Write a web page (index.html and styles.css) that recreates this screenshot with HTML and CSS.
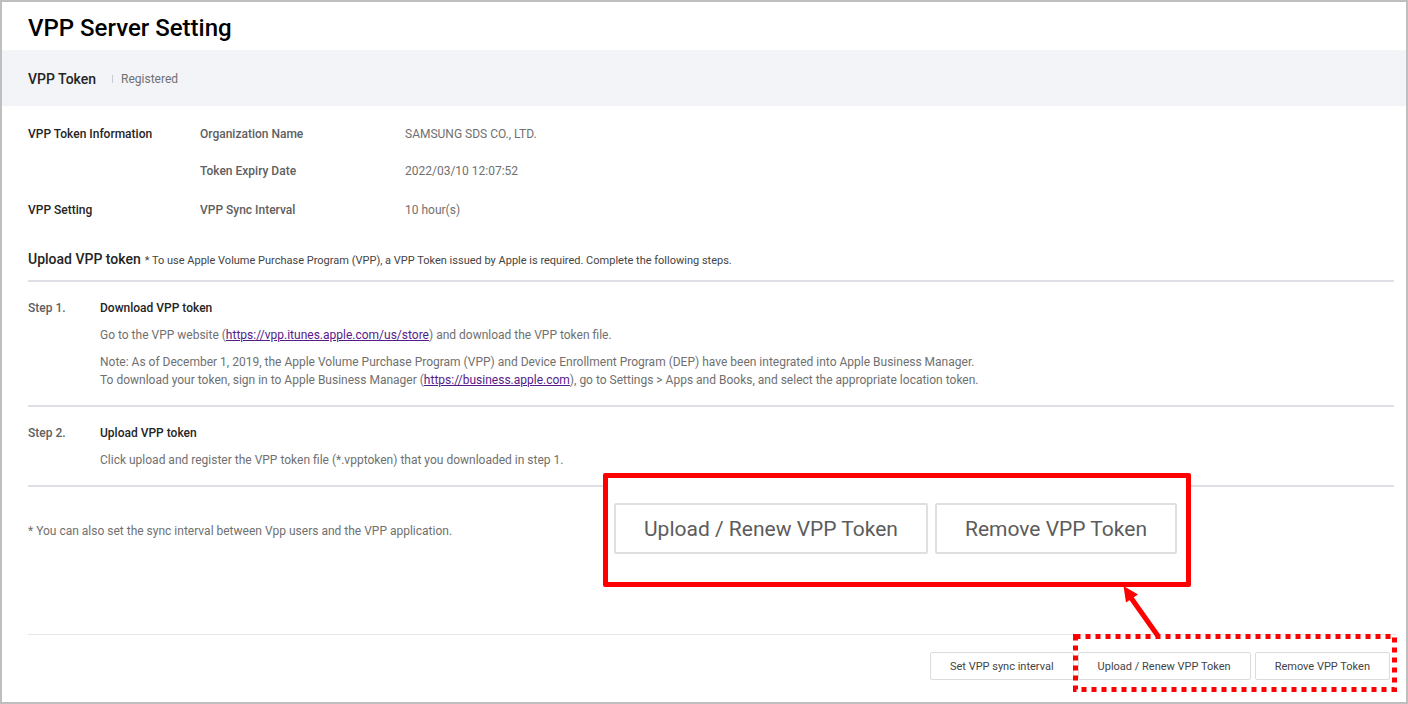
FILE: index.html
```html
<!DOCTYPE html>
<html lang="en">
<head>
<meta charset="utf-8">
<title>VPP Server Setting</title>
<link rel="stylesheet" href="styles.css">
</head>
<body>
<div class="page">
  <header class="page-header">
    <h1 class="page-title">VPP Server Setting</h1>
  </header>
  <div class="status-bar">
    <h2 class="status-title">VPP Token</h2>
    <span class="status-value">Registered</span>
  </div>
  <main class="content">
    <section class="info">
      <h3 class="info-heading">VPP Token Information</h3>
      <dl class="info-list">
        <dt>Organization Name</dt><dd>SAMSUNG SDS CO., LTD.</dd>
        <dt>Token Expiry Date</dt><dd>2022/03/10 12:07:52</dd>
      </dl>
    </section>
    <section class="info">
      <h3 class="info-heading">VPP Setting</h3>
      <dl class="info-list">
        <dt>VPP Sync Interval</dt><dd>10 hour(s)</dd>
      </dl>
    </section>
    <section class="upload">
      <div class="upload-header">
        <h2 class="upload-title">Upload VPP token</h2>
        <p class="upload-hint">* To use Apple Volume Purchase Program (VPP), a VPP Token issued by Apple is required. Complete the following steps.</p>
      </div>
      <div class="step">
        <span class="step-label">Step 1.</span>
        <div class="step-body">
          <h3 class="step-title">Download VPP token</h3>
          <p>Go to the VPP website (<a href="https://vpp.itunes.apple.com/us/store">https://vpp.itunes.apple.com/us/store</a>) and download the VPP token file.</p>
          <p>Note: As of December 1, 2019, the Apple Volume Purchase Program (VPP) and Device Enrollment Program (DEP) have been integrated into Apple Business Manager.<br>To download your token, sign in to Apple Business Manager (<a href="https://business.apple.com">https://business.apple.com</a>), go to Settings &gt; Apps and Books, and select the appropriate location token.</p>
        </div>
      </div>
      <div class="step">
        <span class="step-label">Step 2.</span>
        <div class="step-body">
          <h3 class="step-title">Upload VPP token</h3>
          <p>Click upload and register the VPP token file (*.vpptoken) that you downloaded in step 1.</p>
        </div>
      </div>
    </section>
    <p class="note">* You can also set the sync interval between Vpp users and the VPP application.</p>
  </main>
  <footer class="actions">
    <button class="btn" type="button">Set VPP sync interval</button>
    <div class="token-actions">
      <button class="btn" type="button">Upload / Renew VPP Token</button>
      <button class="btn" type="button">Remove VPP Token</button>
      <svg class="marker" width="324" height="107" viewBox="0 0 324 107" aria-hidden="true">
        <rect x="2.5" y="51.5" width="319" height="53" fill="none" stroke="#f00" stroke-width="5" stroke-dasharray="5 5"/>
        <path d="M85 51 L56 10" fill="none" stroke="#f00" stroke-width="5"/>
        <path d="M50.500 1 L65 9.500 L53 17.500 Z" fill="#f00"/>
      </svg>
      <div class="callout">
        <button class="btn btn-large" type="button">Upload / Renew VPP Token</button>
        <button class="btn btn-large" type="button">Remove VPP Token</button>
      </div>
    </div>
  </footer>
</div>
</body>
</html>
```
FILE: styles.css
```css
* { box-sizing: border-box; }

body {
  margin: 0;
  background: #fff;
  color: #707070;
  font: 12px/18px Roboto, "Liberation Sans", sans-serif;
}

h1, h2, h3, p, dl, dd { margin: 0; }

h1, h2, h3 { font-weight: 500; color: #252525; }

a { color: #551a8b; }

.page {
  display: flex;
  flex-direction: column;
  min-height: 100vh;
  border: 2px solid #bfbfbf;
}

.page-header { padding: 11px 26px 7px; }

.page-title {
  color: #000;
  font-size: 24px;
  line-height: 30px;
}

.status-bar {
  display: flex;
  align-items: center;
  gap: 16px;
  height: 56px;
  padding: 2px 26px 0;
  background: #f2f4f8;
}

.status-title { font-size: 14px; line-height: 18px; }

.status-value {
  display: flex;
  align-items: center;
  gap: 8px;
}

.status-value::before {
  content: "";
  width: 1px;
  height: 8px;
  background: #c8cad2;
}

.content {
  flex: 1;
  padding: 19px 12px 0 26px;
}

.info { display: flex; margin-bottom: 21px; }

.info-heading {
  width: 172px;
  font-size: 12px;
  line-height: 18px;
}

.info-list {
  display: grid;
  grid-template-columns: 205px 1fr;
  row-gap: 19px;
}

.info-list dt { color: #606060; font-weight: 500; }

.upload { margin-top: 31px; }

.upload-header {
  display: flex;
  align-items: baseline;
  gap: 4px;
  padding-bottom: 10px;
}

.upload-title { font-size: 14px; line-height: 18px; }

.upload-hint { color: #444; font-size: 11px; }

.step {
  display: flex;
  padding: 17px 0 16px;
  border-top: 2px solid #dfdfe7;
}

.step:last-child { border-bottom: 2px solid #dfdfe7; }

.step-label {
  width: 72px;
  color: #606060;
  font-weight: 500;
}

.step-title { font-size: 12px; line-height: 18px; }

.step-body p { margin-top: 9px; }

.note { margin-top: 35px; }

.actions {
  display: flex;
  justify-content: flex-end;
  gap: 4px;
  margin: 0 10px 0 26px;
  padding: 17px 6px 22px 0;
  border-top: 1px solid #e6e6ec;
}

.btn {
  padding: 5px 19px 4px;
  border: 1px solid #dcdcdc;
  border-radius: 2px;
  background: #fff;
  color: #444;
  font: 11px/17px Roboto, "Liberation Sans", sans-serif;
}

.token-actions {
  position: relative;
  display: flex;
  gap: 4px;
}

.marker {
  position: absolute;
  right: -7px;
  bottom: -12px;
  pointer-events: none;
}

.callout {
  position: absolute;
  right: 199px;
  bottom: 93px;
  display: flex;
  gap: 7px;
  padding: 25px 9px 28px 6px;
  border: 5px solid #f00;
  border-radius: 2px;
  background: #fff;
}

.btn-large {
  padding: 11px 28px 10px;
  border: 2px solid #dfdfdf;
  color: #5c5c5c;
  font-size: 21px;
  line-height: 26px;
  white-space: nowrap;
}
```
